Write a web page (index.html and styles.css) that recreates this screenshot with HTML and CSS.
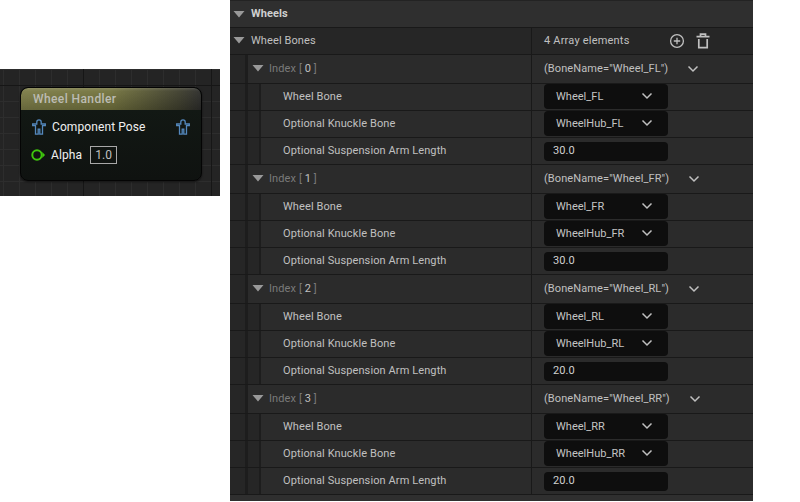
FILE: index.html
```
<!DOCTYPE html>
<html lang="en">
<head>
<meta charset="utf-8">
<title>Wheel Handler</title>
<link rel="stylesheet" href="styles.css">
</head>
<body>
<svg class="defs" width="0" height="0" aria-hidden="true">
  <defs>
    <symbol id="tri" viewBox="0 0 12 8"><path d="M0.5 1h11L6 7.5z" fill="currentColor"/></symbol>
    <symbol id="chev" viewBox="0 0 12 8"><path d="M1.5 1.5L6 6l4.5-4.5" fill="none" stroke="currentColor" stroke-width="1.5"/></symbol>
    <symbol id="pose" viewBox="0 0 14 16"><path d="M7 .8a2.200 2.200 0 0 1 2.200 2.200v2h4.100v1.600h-2.800v8.600H7.800v-5H6.200v5H3.500V6.600H.7V5h4.100V3A2.200 2.200 0 0 1 7 .8z" fill="none" stroke="#5488bd" stroke-width="1.300"/></symbol>
  </defs>
</svg>
<section class="canvas">
  <div class="node">
    <div class="node-title">Wheel Handler</div>
    <div class="pin-row pose-row">
      <svg class="pose"><use href="#pose"/></svg>
      <span class="pin-label">Component Pose</span>
      <svg class="pose pose-out"><use href="#pose"/></svg>
    </div>
    <div class="pin-row alpha-row">
      <svg class="alpha-pin" viewBox="0 0 14 12"><circle cx="6" cy="6" r="4.700" fill="none" stroke="#3fc60d" stroke-width="2"/><path d="M11.300 3L14 6l-2.700 3z" fill="#3fc60d"/></svg>
      <span class="pin-label alpha-label">Alpha</span>
      <span class="alpha-value">1.0</span>
    </div>
  </div>
</section>
<main class="panel">
  <div class="row category"><div class="name"><svg class="tri"><use href="#tri"/></svg>Wheels</div></div>
  <div class="row array">
    <div class="name"><svg class="tri"><use href="#tri"/></svg>Wheel Bones</div>
    <div class="value"><span class="count">4 Array elements</span>
      <svg class="icon-add" viewBox="0 0 16 16"><circle cx="8" cy="8" r="6.400" fill="none" stroke="currentColor" stroke-width="1.300"/><path d="M8 4.800v6.400M4.800 8h6.400" stroke="currentColor" stroke-width="1.300"/></svg>
      <svg class="icon-del" viewBox="0 0 14 16"><path d="M.500 3.700h13M4.500 3.500V1.200h5v2.300M2.800 6v8.700h8.400V6" fill="none" stroke="currentColor" stroke-width="1.700"/></svg>
    </div>
  </div>

  <div class="row index"><div class="bar"></div><div class="name"><svg class="tri"><use href="#tri"/></svg>Index [<b>&nbsp;0&nbsp;</b>]</div><div class="value"><span class="struct">(BoneName="Wheel_FL")</span><svg class="chev"><use href="#chev"/></svg></div></div>
  <div class="row prop"><div class="bar"></div><div class="bar bar2"></div><div class="name">Wheel Bone</div><div class="value"><div class="combo"><span>Wheel_FL</span><svg class="chev"><use href="#chev"/></svg></div></div></div>
  <div class="row prop"><div class="bar"></div><div class="bar bar2"></div><div class="name">Optional Knuckle Bone</div><div class="value"><div class="combo"><span>WheelHub_FL</span><svg class="chev"><use href="#chev"/></svg></div></div></div>
  <div class="row prop"><div class="bar"></div><div class="bar bar2"></div><div class="name">Optional Suspension Arm Length</div><div class="value"><div class="num">30.0</div></div></div>

  <div class="row index"><div class="bar"></div><div class="name"><svg class="tri"><use href="#tri"/></svg>Index [<b>&nbsp;1&nbsp;</b>]</div><div class="value"><span class="struct">(BoneName="Wheel_FR")</span><svg class="chev"><use href="#chev"/></svg></div></div>
  <div class="row prop"><div class="bar"></div><div class="bar bar2"></div><div class="name">Wheel Bone</div><div class="value"><div class="combo"><span>Wheel_FR</span><svg class="chev"><use href="#chev"/></svg></div></div></div>
  <div class="row prop"><div class="bar"></div><div class="bar bar2"></div><div class="name">Optional Knuckle Bone</div><div class="value"><div class="combo"><span>WheelHub_FR</span><svg class="chev"><use href="#chev"/></svg></div></div></div>
  <div class="row prop"><div class="bar"></div><div class="bar bar2"></div><div class="name">Optional Suspension Arm Length</div><div class="value"><div class="num">30.0</div></div></div>

  <div class="row index"><div class="bar"></div><div class="name"><svg class="tri"><use href="#tri"/></svg>Index [<b>&nbsp;2&nbsp;</b>]</div><div class="value"><span class="struct">(BoneName="Wheel_RL")</span><svg class="chev"><use href="#chev"/></svg></div></div>
  <div class="row prop"><div class="bar"></div><div class="bar bar2"></div><div class="name">Wheel Bone</div><div class="value"><div class="combo"><span>Wheel_RL</span><svg class="chev"><use href="#chev"/></svg></div></div></div>
  <div class="row prop"><div class="bar"></div><div class="bar bar2"></div><div class="name">Optional Knuckle Bone</div><div class="value"><div class="combo"><span>WheelHub_RL</span><svg class="chev"><use href="#chev"/></svg></div></div></div>
  <div class="row prop"><div class="bar"></div><div class="bar bar2"></div><div class="name">Optional Suspension Arm Length</div><div class="value"><div class="num">20.0</div></div></div>

  <div class="row index"><div class="bar"></div><div class="name"><svg class="tri"><use href="#tri"/></svg>Index [<b>&nbsp;3&nbsp;</b>]</div><div class="value"><span class="struct">(BoneName="Wheel_RR")</span><svg class="chev"><use href="#chev"/></svg></div></div>
  <div class="row prop"><div class="bar"></div><div class="bar bar2"></div><div class="name">Wheel Bone</div><div class="value"><div class="combo"><span>Wheel_RR</span><svg class="chev"><use href="#chev"/></svg></div></div></div>
  <div class="row prop"><div class="bar"></div><div class="bar bar2"></div><div class="name">Optional Knuckle Bone</div><div class="value"><div class="combo"><span>WheelHub_RR</span><svg class="chev"><use href="#chev"/></svg></div></div></div>
  <div class="row prop"><div class="bar"></div><div class="bar bar2"></div><div class="name">Optional Suspension Arm Length</div><div class="value"><div class="num">20.0</div></div></div>
</main>
</body>
</html>
```
FILE: styles.css
```
* { box-sizing: border-box; }
html, body { margin: 0; height: 100%; background: #fff; }
body {
  display: flex;
  align-items: flex-start;
  font-family: Roboto, "Liberation Sans", sans-serif;
  font-size: 11px;
  letter-spacing: .1px;
  overflow: hidden;
}
.defs { position: absolute; }

/* Graph canvas */
.canvas {
  flex: none;
  width: 220px;
  height: 127px;
  margin-top: 69px;
  margin-right: 10px;
  padding: 18px 0 0 20px;
  background-color: #242424;
  background-image:
    linear-gradient(90deg, #161616 1px, transparent 1px),
    linear-gradient(#161616 1px, transparent 1px),
    linear-gradient(90deg, #2d2d2d 1px, transparent 1px),
    linear-gradient(#2d2d2d 1px, transparent 1px);
  background-size: 128px 100%, 100% 128px, 16px 100%, 100% 16px;
  background-position: 83px 0, 0 16px, 3px 0, 0 0;
}
.node {
  width: 182px;
  height: 94px;
  background: linear-gradient(180deg, #131a15, #0f1210);
  border: 1px solid #040404;
  border-radius: 8px;
  overflow: hidden;
  box-shadow: 0 1px 2px rgba(0, 0, 0, .6);
}
.node-title {
  height: 22px;
  padding: 4px 0 0 12px;
  font-size: 12px;
  font-weight: 500;
  letter-spacing: .4px;
  color: #bcbcb3;
  background:
    linear-gradient(180deg, rgba(255, 255, 255, .16) 0, rgba(255, 255, 255, .04) 3px, rgba(0, 0, 0, .18) 100%),
    linear-gradient(90deg, #7d7d48 0%, #74743f 50%, #3f3f2e 88%, #2d2d2b 100%);
  border-radius: 7px 7px 0 0;
}
.pin-row { display: flex; align-items: center; color: #f0f0f0; font-size: 12px; }
.pose-row { height: 16px; margin-top: 9px; padding-left: 11px; }
.pose { width: 14px; height: 16px; flex: none; }
.pin-label { margin-left: 6px; }
.pose-out { margin-left: auto; margin-right: 11px; }
.alpha-row { height: 18px; margin-top: 11px; padding-left: 10px; }
.alpha-pin { width: 14px; height: 12px; flex: none; }
.alpha-label { margin-left: 6px; }
.alpha-value {
  margin-left: 8px;
  width: 27px;
  height: 18px;
  border: 1px solid #a8a8a8;
  text-align: center;
  line-height: 16px;
  color: #c0c0c0;
}

/* Details panel */
.panel {
  flex: none;
  width: 523px;
  height: 501px;
  background: #2f2f2f;
  color: #c0c0c0;
}
.row {
  display: flex;
  align-items: stretch;
  height: 27px;
  border-bottom: 1px solid #191919;
  background: #2b2b2b;
}
.row.category { height: 28px; background: #2f2f2f; font-weight: 700; color: #cfcfcf; border-top: 1px solid #232323; }
.row.array { background: #262626; }
.row.index { height: 29px; background: #2b2b2b; }
.bar { flex: none; width: 18px; background: #262626; border-right: 3px solid #1d1d1d; }
.bar2 { width: 13px; border-right: 2px solid #1d1d1d; }
.name { flex: none; width: 301px; display: flex; align-items: center; padding: 0 0 2px 21px; white-space: nowrap; position: relative; }
.category .name { padding-bottom: 1px; }
.index .name { width: 283px; padding-left: 21px; color: #7a7a7a; }
.index b { color: #c0c0c0; font-weight: 400; }
.prop .name { width: 270px; padding-left: 22px; }
.tri { width: 12px; height: 8px; color: #999; position: absolute; }
.array .tri, .category .tri { margin-left: -18px; }
.index .tri { margin-left: -17px; }
.value { flex: 1; display: flex; align-items: center; padding-left: 12px; border-left: 1px solid #191919; }
.count, .struct { padding-bottom: 2px; }
.count { width: 125px; letter-spacing: .2px; }
.icon-add { width: 16px; height: 16px; color: #c0c0c0; margin-bottom: 1px; }
.icon-del { width: 14px; height: 16px; color: #c0c0c0; margin: 0 0 1px 11px; }
.struct { margin-right: 19px; }
.chev { width: 12px; height: 8px; color: #c0c0c0; flex: none; }
.combo {
  width: 124px;
  height: 25px;
  margin-bottom: 1px;
  background: #0e0e0e;
  border-radius: 4px;
  display: flex;
  align-items: center;
  justify-content: space-between;
  padding: 0 15px 1px 12px;
  color: #c4c4c4;
  letter-spacing: .03px;
}
.num {
  width: 124px;
  height: 19px;
  line-height: 18px;
  background: #0e0e0e;
  border-radius: 4px;
  padding-left: 9px;
  color: #d0d0d0;
}
```
